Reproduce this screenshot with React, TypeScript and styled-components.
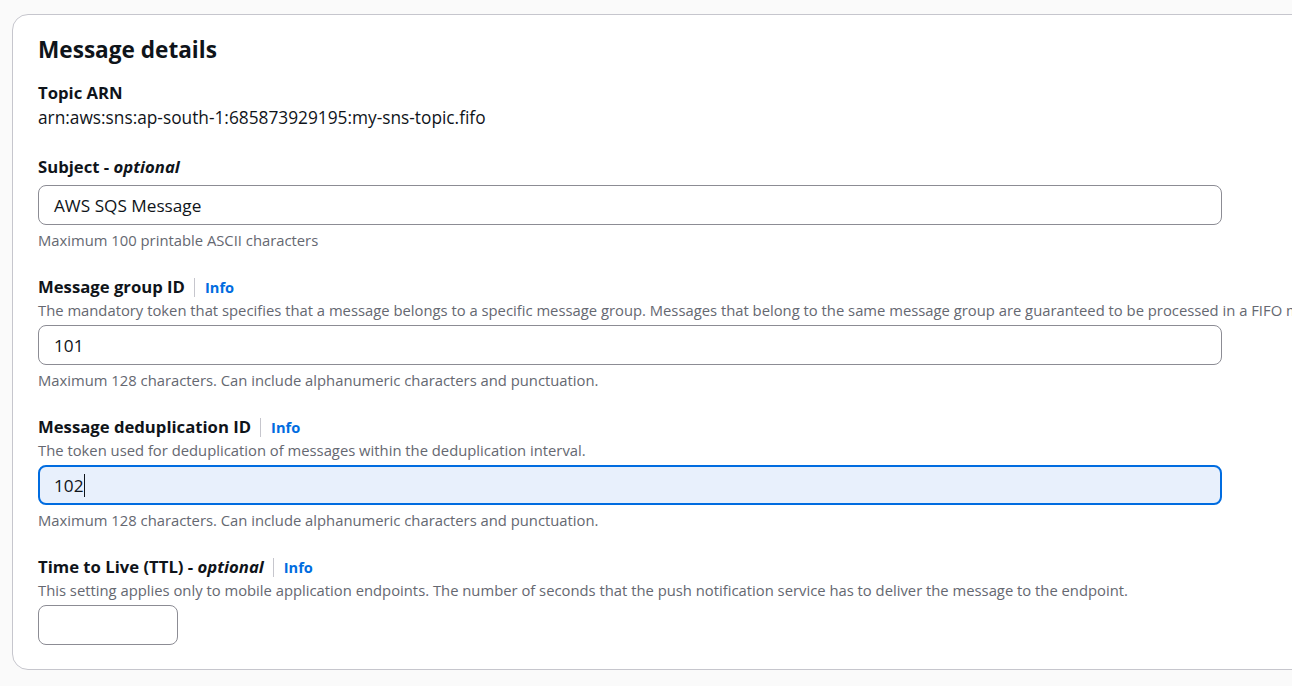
import React from "react";
import styled, { createGlobalStyle } from "styled-components";

const Global = createGlobalStyle`
  html, body { margin: 0; padding: 0; background: #fafafa; overflow: hidden; }
  body { font-family: "Open Sans", "Liberation Sans", sans-serif; color: #0f141a; }
`;

const Page = styled.div`
  padding: 14px 0 0 12px;
  width: 1400px;
`;

const Card = styled.section`
  width: 1340px;
  background: #ffffff;
  border: 1px solid #c6c6cd;
  border-radius: 16px;
  padding: 20px 25px 24px 25px;
  box-sizing: border-box;
`;

const Heading = styled.h2`
  margin: 0 0 16px 0;
  font-size: 22.6px;
  line-height: 30px;
  font-weight: 700;
`;

const Field = styled.div`
  display: flex;
  flex-direction: column;
  margin-bottom: 25px;
  &:last-child { margin-bottom: 0; }
`;

const LabelRow = styled.div`
  display: flex;
  align-items: center;
  height: 24px;
`;

const Label = styled.label`
  font-size: 16.7px;
  line-height: 24px;
  font-weight: 700;
  em { font-style: italic; font-weight: 700; }
`;

const Divider = styled.span`
  width: 1px;
  height: 19px;
  background: #c6c6cd;
  margin: 0 10px 0 9px;
`;

const InfoLink = styled.a`
  font-size: 14.6px;
  font-weight: 700;
  color: #006ce0;
  text-decoration: none;
  line-height: 24px;
`;

const Description = styled.div`
  font-size: 14.8px;
  line-height: 20px;
  color: #656871;
  white-space: nowrap;
  margin-top: 1px;
`;

const Value = styled.div`
  font-size: 17.3px;
  line-height: 24px;
  margin-top: 1px;
`;

const Input = styled.div<{ $focused?: boolean; $width?: number }>`
  box-sizing: border-box;
  width: ${(p) => p.$width ?? 1184}px;
  height: 40px;
  margin-top: 5px;
  border: ${(p) => (p.$focused ? "2px solid #006ce0" : "1px solid #8c8c94")};
  background: ${(p) => (p.$focused ? "#e8f0fc" : "#ffffff")};
  border-radius: 8px;
  display: flex;
  align-items: center;
  padding-left: ${(p) => (p.$focused ? 14 : 15)}px;
  font-size: 17.2px;
`;

const LabelledInput = styled(Input)`
  margin-top: 6px;
`;

const Caret = styled.span`
  display: inline-block;
  width: 1px;
  height: 23px;
  background: #0f141a;
  margin-left: 1px;
`;

const Constraint = styled(Description)`
  margin-top: 5px;
`;

export default function App() {
  return (
    <>
      <Global />
      <Page>
        <Card>
          <Heading>Message details</Heading>
          <Field>
            <LabelRow><Label>Topic ARN</Label></LabelRow>
            <Value>arn:aws:sns:ap-south-1:685873929195:my-sns-topic.fifo</Value>
          </Field>
          <Field>
            <LabelRow><Label>Subject - <em>optional</em></Label></LabelRow>
            <LabelledInput>AWS SQS Message</LabelledInput>
            <Constraint>Maximum 100 printable ASCII characters</Constraint>
          </Field>
          <Field>
            <LabelRow>
              <Label>Message group ID</Label>
              <Divider />
              <InfoLink href="#">Info</InfoLink>
            </LabelRow>
            <Description>The mandatory token that specifies that a message belongs to a specific message group. Messages that belong to the same message group are guaranteed to be processed in a FIFO manner.</Description>
            <Input>101</Input>
            <Constraint>Maximum 128 characters. Can include alphanumeric characters and punctuation.</Constraint>
          </Field>
          <Field>
            <LabelRow>
              <Label>Message deduplication ID</Label>
              <Divider />
              <InfoLink href="#">Info</InfoLink>
            </LabelRow>
            <Description>The token used for deduplication of messages within the deduplication interval.</Description>
            <Input $focused>102<Caret /></Input>
            <Constraint>Maximum 128 characters. Can include alphanumeric characters and punctuation.</Constraint>
          </Field>
          <Field>
            <LabelRow>
              <Label>Time to Live (TTL) - <em>optional</em></Label>
              <Divider />
              <InfoLink href="#">Info</InfoLink>
            </LabelRow>
            <Description>This setting applies only to mobile application endpoints. The number of seconds that the push notification service has to deliver the message to the endpoint.</Description>
            <Input $width={140} />
          </Field>
        </Card>
      </Page>
    </>
  );
}
